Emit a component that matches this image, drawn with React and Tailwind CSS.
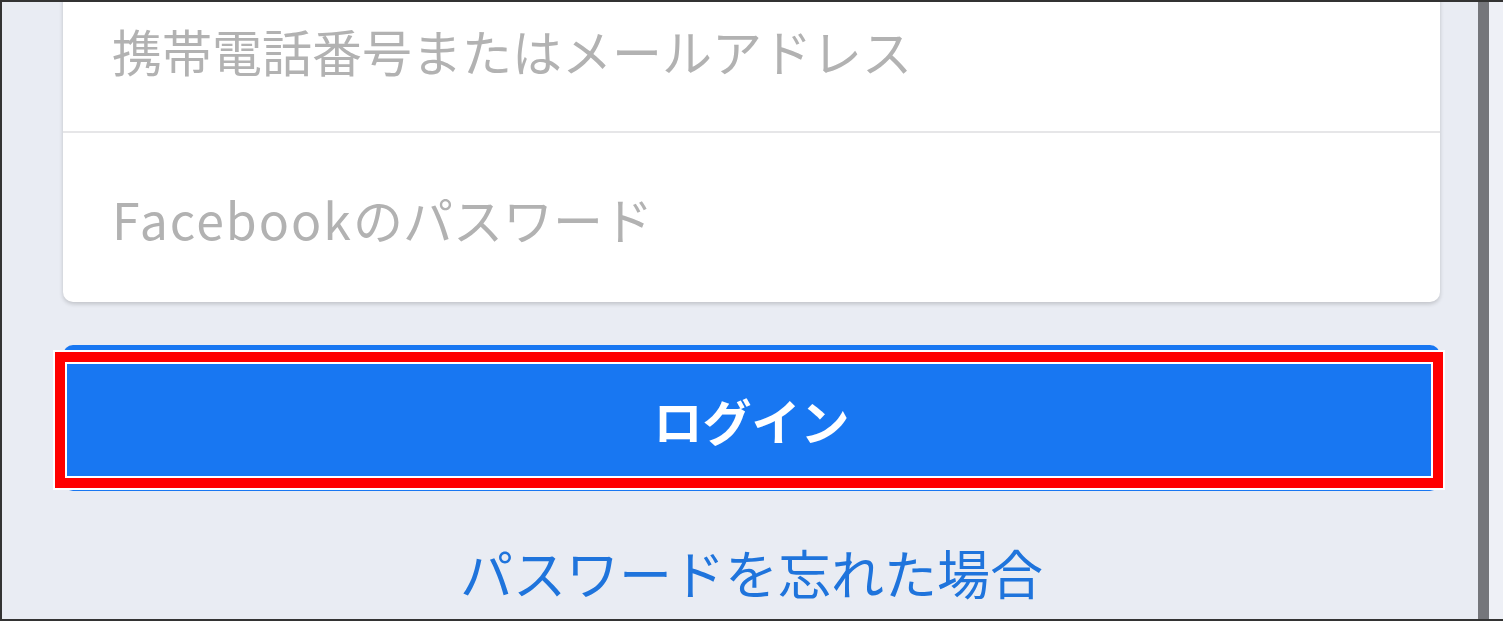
import React from "react";

const font = { fontFamily: '"Noto Sans CJK JP", "Noto Sans", sans-serif' };

export default function App() {
  return (
    <div
      className="flex h-[621px] w-[1503px] overflow-hidden border-b-2 border-l-2 border-t-2 border-[#333333] bg-[#e9ecf3]"
      style={font}
    >
      {/* page content */}
      <div className="flex w-[1476px] flex-col pl-[61px]">
        {/* login fields card */}
        <div className="-mt-[40px] w-[1377px] rounded-b-[10px] bg-white shadow-[0_2px_4px_rgba(0,0,0,0.18)]">
          <div className="flex h-[171px] items-center border-b-2 border-[#e6e6e8] pl-[49px] pt-[6px]">
            <span className="text-[50px] leading-[60px] text-[#b2b2b2]">
              携帯電話番号またはメールアドレス
            </span>
          </div>
          <div className="flex h-[169px] items-center pl-[49px]">
            <span className="text-[50px] leading-[60px] text-[#b2b2b2]">
              <span className="tracking-[2px]">Facebook</span>のパスワード
            </span>
          </div>
        </div>

        {/* login button */}
        <div className="relative mt-[43px] h-[146px] w-[1377px] rounded-[10px] bg-[#1877f2]">
          <div className="flex h-full items-center justify-center pt-[4px]">
            <span className="text-[49px] font-bold leading-[60px] text-white">
              ログイン
            </span>
          </div>
          {/* red highlight frame */}
          <div className="pointer-events-none absolute left-[-8px] top-[7px] h-[136px] w-[1388px] border-[10px] border-[#ff0000] shadow-[inset_0_0_0_2px_#ffffff] outline-2 outline-white" />
        </div>

        {/* forgot password link */}
        <div className="mt-[53px] flex w-[1377px] justify-center">
          <span className="text-[53px] leading-[56px] text-[#1f74dc]">
            パスワードを忘れた場合
          </span>
        </div>
      </div>

      {/* scrollbar */}
      <div className="w-[11px] shrink-0 bg-[#75767b]" />
      <div className="flex-1 bg-[#eef0f6]" />
    </div>
  );
}
